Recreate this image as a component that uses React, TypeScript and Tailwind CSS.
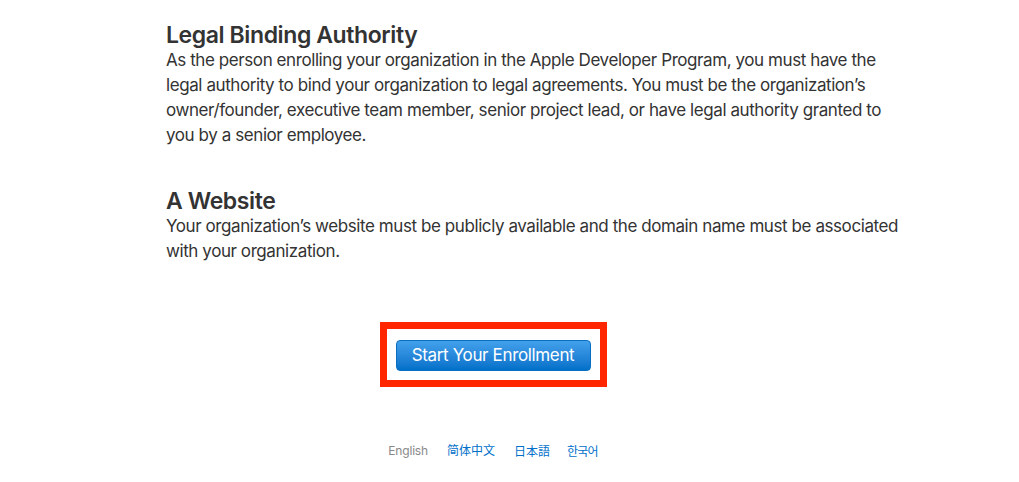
export default function App() {
  return (
    <div className="w-[986px] min-h-[482px] bg-white text-[#333] font-['Inter','Noto_Sans',sans-serif]">
      <div className="ml-[166px] w-[740px] pt-[22px]">
        <h2 className="text-[23px] leading-[26px] font-semibold tracking-[-0.4px]">Legal Binding Authority</h2>
        <p className="text-[17px] leading-[25px] tracking-[-0.42px]">
          As the person enrolling your organization in the Apple Developer Program, you must have the legal authority to bind your organization to legal agreements. You must be the organization’s owner/founder, executive team member, senior project lead, or have legal authority granted to you by a senior employee.
        </p>

        <h2 className="mt-[40px] text-[23px] leading-[26px] font-semibold tracking-[-0.4px]">A Website</h2>
        <p className="text-[17px] leading-[25px] tracking-[-0.42px]">
          Your organization’s website must be publicly available and the domain name must be associated with your organization.
        </p>
      </div>

      <div className="mt-[58px] flex justify-center">
        <div className="border-[7px] border-[#ff2600] px-[9px] pt-[11px] pb-[9px]">
          <button className="h-[31px] w-[195px] rounded-[4px] border border-[#0a6fc2] bg-gradient-to-b from-[#42a1ec] to-[#0070c9] text-[17px] leading-none text-white tracking-[-0.35px]">
            Start Your Enrollment
          </button>
        </div>
      </div>

      <div className="mt-[56px] flex justify-center text-[12px] leading-[16px] font-['Inter','Noto_Sans_CJK_SC',sans-serif]">
        <span className="text-[#888] tracking-[-0.2px] mr-[19px]">English</span>
        <a className="text-[#0070c9] mr-[19px]">简体中文</a>
        <a className="text-[#0070c9] mr-[17px] font-['Noto_Sans_CJK_JP',sans-serif]">日本語</a>
        <a className="text-[#0070c9] tracking-[-0.8px] font-['Noto_Sans_CJK_KR',sans-serif]">한국어</a>
      </div>
    </div>
  );
}
